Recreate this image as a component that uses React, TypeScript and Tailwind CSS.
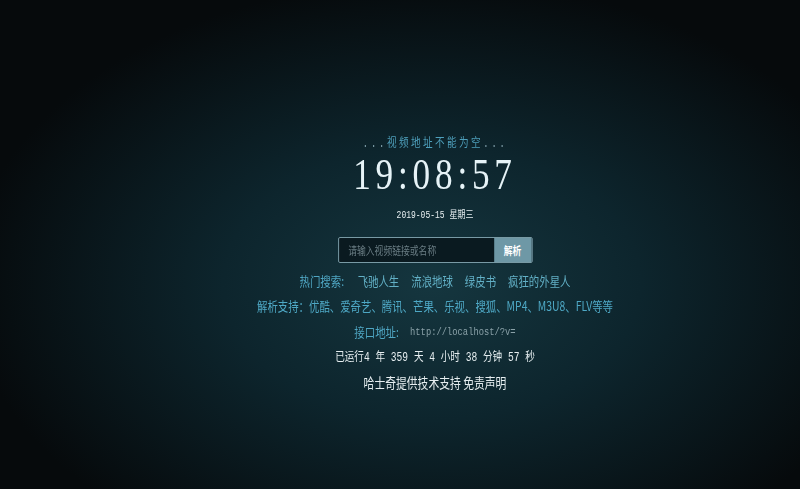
const hotWords = ["飞驰人生", "流浪地球", "绿皮书", "疯狂的外星人"];

const cjk = "font-['Noto_Sans_CJK_SC','Noto_Sans',sans-serif]";
const mono = "font-['Liberation_Mono','Noto_Sans_CJK_SC',monospace]";

export default function App() {
  return (
    <div className="h-[489px] w-full overflow-hidden bg-[radial-gradient(ellipse_58%_62%_at_54%_58%,#15363f_0%,#0d252d_45%,#060a0c_100%)] pl-[70px]">
      <div className="flex origin-center scale-x-[0.8] flex-col items-center pt-[137px]">
        {/* status message */}
        <p className={`${mono} text-[12px] leading-[14px] tracking-[3px] text-[#4e9fbb]`}>
          <span className="text-[#7f9ea8]">...</span>视频地址不能为空<span className="text-[#7f9ea8]">...</span>
        </p>

        {/* clock */}
        <h1 className="mt-[3px] font-['Liberation_Serif',serif] text-[44px] leading-[42px] tracking-[6px] text-[#e6f3f7]">
          19:08:57
        </h1>

        <p className={`${mono} mt-[13px] text-[10px] leading-[14px] text-[#e6eef0]`}>
          2019-05-15 星期三
        </p>

        {/* search box */}
        <div className="mt-[14px] flex h-[26px] w-[243px] overflow-hidden rounded-[2px] border border-[#86a8b3] bg-[#0a1a20]">
          <input
            className={`${cjk} h-full min-w-0 flex-1 bg-transparent px-3 text-[11px] text-[#cfe0e5] outline-none placeholder:text-[#6a7d84]`}
            placeholder="请输入视频链接或名称"
          />
          <button className={`${cjk} w-[47px] bg-[#6e98a6] text-[11px] font-bold text-white`}>
            解析
          </button>
        </div>

        {/* hot searches */}
        <div className={`${cjk} mt-[9px] flex gap-[15px] text-[13px] leading-[18px]`}>
          <span className="mr-[2px] text-[#4fa6c3]">热门搜索:</span>
          {hotWords.map((w) => (
            <a key={w} className="text-[#62b0c6]">
              {w}
            </a>
          ))}
        </div>

        <p className={`${cjk} mt-[7px] text-[13px] leading-[18px] text-[#4ea8c5]`}>
          解析支持：优酷、爱奇艺、腾讯、芒果、乐视、搜狐、MP4、M3U8、FLV等等
        </p>

        <div className="mt-[8px] flex items-center gap-[14px] leading-[18px]">
          <span className={`${cjk} text-[13px] text-[#4fa6c3]`}>接口地址:</span>
          <span className={`${mono} text-[11px] text-[#8aa1a8]`}>http://localhost/?v=</span>
        </div>

        <p className={`${mono} mt-[8px] text-[12px] leading-[18px] text-[#e6eef0]`}>
          已运行4 年 359 天 4 小时 38 分钟 57 秒
        </p>

        <p className={`${cjk} mt-[6px] text-[13.5px] leading-[18px] text-[#e6eef0]`}>
          哈士奇提供技术支持 免责声明
        </p>
      </div>
    </div>
  );
}
